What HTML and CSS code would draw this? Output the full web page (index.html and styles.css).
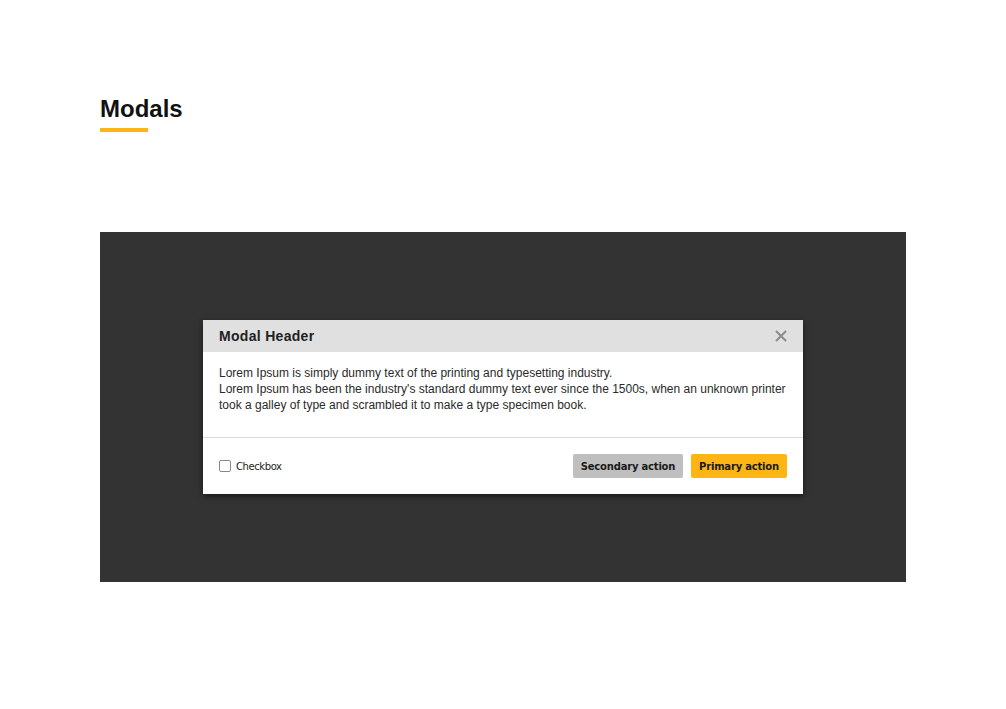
FILE: index.html
```html
<!DOCTYPE html>
<html>
<head>
<meta charset="utf-8">
<link rel="stylesheet" href="styles.css">
</head>
<body>
<div class="page">
  <h1 class="title">Modals</h1>
  <div class="stage">
    <div class="modal">
      <div class="modal-header">
        <span class="modal-title">Modal Header</span>
        <svg class="close" width="12" height="12" viewBox="0 0 12 12"><path d="M1 1L11 11M11 1L1 11" stroke="#8c8c8c" stroke-width="2" fill="none"/></svg>
      </div>
      <div class="modal-body">
        <p>Lorem Ipsum is simply dummy text of the printing and typesetting industry.<br>Lorem Ipsum has been the industry's standard dummy text ever since the 1500s, when an unknown printer took a galley of type and scrambled it to make a type specimen book.</p>
      </div>
      <div class="modal-footer">
        <label class="check"><span class="box"></span>Checkbox</label>
        <div class="actions">
          <button class="btn btn-secondary">Secondary action</button>
          <button class="btn btn-primary">Primary action</button>
        </div>
      </div>
    </div>
  </div>
</div>
</body>
</html>
```
FILE: styles.css
```css
html, body { margin: 0; padding: 0; background: #fff; }
body { font-family: "Liberation Sans", Arial, sans-serif; color: #222; }
.page { padding: 95px 100px 0 100px; }
.title {
  margin: 0;
  font-size: 24px;
  font-weight: bold;
  color: #111;
  line-height: 28px;
  display: inline-block;
}
.title::after {
  content: "";
  display: block;
  width: 48px;
  height: 4px;
  background: #fcb713;
  margin-top: 5px;
}
.stage {
  margin-top: 100px;
  height: 350px;
  background: #333333;
  display: flex;
  justify-content: center;
  padding-top: 88px;
  box-sizing: border-box;
}
.modal {
  width: 600px;
  height: 174px;
  background: #fff;
  box-shadow: 0 2px 6px rgba(0,0,0,0.55);
  display: flex;
  flex-direction: column;
}
.modal-header {
  height: 32px;
  background: #e0e0e0;
  display: flex;
  align-items: center;
  justify-content: space-between;
  padding: 0 16px;
}
.modal-title { font-size: 14px; font-weight: bold; color: #222; letter-spacing: 0.3px; }
.modal-body { padding: 13px 16px 0 16px; height: 86px; box-sizing: border-box; border-bottom: 1px solid #dcdcdc; }
.modal-body p { margin: 0; font-size: 12px; line-height: 16px; color: #2a2a2a; }
.modal-footer {
  flex: 1;
  display: flex;
  align-items: center;
  justify-content: space-between;
  padding: 0 16px;
}
.check { display: flex; align-items: center; font-family: "DejaVu Sans", Verdana, sans-serif; font-size: 10px; color: #222; letter-spacing: -0.4px; }
.box { width: 10px; height: 10px; border: 1px solid #888; border-radius: 2px; margin-right: 5px; background: #fff; }
.actions { display: flex; gap: 8px; }
.btn {
  border: none;
  height: 24px;
  border-radius: 2px;
  font-family: "DejaVu Sans", Verdana, sans-serif;
  font-weight: bold;
  font-size: 10px;
  letter-spacing: -0.2px;
  color: #1a1a1a;
  padding: 0;
  white-space: nowrap;
}
.btn-secondary { background: #bfbfbf; width: 110px; }
.btn-primary { background: #fdb515; width: 96px; }
```
